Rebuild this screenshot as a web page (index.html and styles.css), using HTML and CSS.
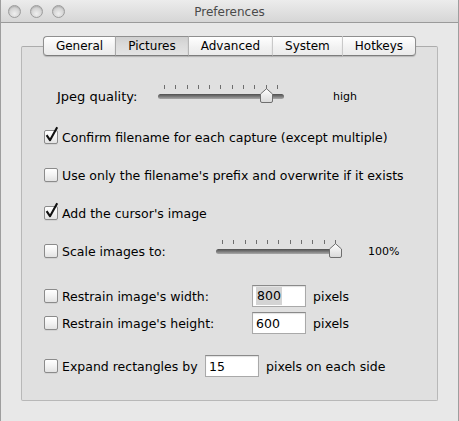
FILE: index.html
```html
<!DOCTYPE html>
<html>
<head>
<meta charset="utf-8">
<link rel="stylesheet" href="styles.css">
</head>
<body>
<div class="window">
  <header class="titlebar">
    <div class="lights"><span class="light"></span><span class="light"></span><span class="light"></span></div>
    <div class="title">Preferences</div>
    <div></div>
  </header>
  <main class="content">
    <div class="tabview">
      <nav class="tabs">
        <span class="tab">General</span>
        <span class="tab active">Pictures</span>
        <span class="tab">Advanced</span>
        <span class="tab">System</span>
        <span class="tab">Hotkeys</span>
      </nav>
      <section class="pane">
        <div class="row quality">
          <span class="quality-label">Jpeg quality:</span>
          <div class="slider" style="--v:0.9">
            <div class="ticks"><i></i><i></i><i></i><i></i><i></i><i></i><i></i><i></i><i></i><i></i><i></i></div>
            <div class="track"></div>
            <svg class="thumb" width="13" height="15" viewBox="0 0 13 15"><defs><linearGradient id="tg1" x1="0" y1="0" x2="0" y2="1"><stop offset="0" stop-color="#ffffff"/><stop offset="1" stop-color="#d9d9d9"/></linearGradient></defs><path d="M0.5 13 V6 L6.5 0.7 L12.5 6 V13 Q12.5 14.5 11 14.5 H2 Q0.5 14.5 0.5 13 Z" fill="url(#tg1)" stroke="#6e6e6e"/></svg>
          </div>
          <span class="value quality-value">high</span>
        </div>

        <div class="row">
          <span class="check on"><svg width="16" height="18" viewBox="0 0 16 18"><path d="M3.6 9.2 L7 14.2 L14.2 1.2" fill="none" stroke="#111" stroke-width="2.1" stroke-linejoin="round"/></svg></span>
          <span>Confirm filename for each capture (except multiple)</span>
        </div>

        <div class="row">
          <span class="check"></span>
          <span>Use only the filename's prefix and overwrite if it exists</span>
        </div>

        <div class="row">
          <span class="check on"><svg width="16" height="18" viewBox="0 0 16 18"><path d="M3.6 9.2 L7 14.2 L14.2 1.2" fill="none" stroke="#111" stroke-width="2.1" stroke-linejoin="round"/></svg></span>
          <span>Add the cursor's image</span>
        </div>

        <div class="row">
          <span class="check"></span>
          <span class="scale-label">Scale images to:</span>
          <div class="slider" style="--v:1">
            <div class="ticks"><i></i><i></i><i></i><i></i><i></i><i></i><i></i><i></i><i></i><i></i><i></i></div>
            <div class="track"></div>
            <svg class="thumb" width="13" height="15" viewBox="0 0 13 15"><defs><linearGradient id="tg2" x1="0" y1="0" x2="0" y2="1"><stop offset="0" stop-color="#ffffff"/><stop offset="1" stop-color="#d9d9d9"/></linearGradient></defs><path d="M0.5 13 V6 L6.5 0.7 L12.5 6 V13 Q12.5 14.5 11 14.5 H2 Q0.5 14.5 0.5 13 Z" fill="url(#tg2)" stroke="#6e6e6e"/></svg>
          </div>
          <span class="value scale-value">100%</span>
        </div>

        <div class="restrain">
          <div class="row">
            <span class="check"></span>
            <span class="restrain-label">Restrain image's width:</span>
            <span class="field"><span class="sel">800</span></span>
            <span class="unit">pixels</span>
          </div>
          <div class="row">
            <span class="check"></span>
            <span class="restrain-label">Restrain image's height:</span>
            <span class="field">600</span>
            <span class="unit">pixels</span>
          </div>
        </div>

        <div class="row expand">
          <span class="check"></span>
          <span class="expand-label">Expand rectangles by</span>
          <span class="field">15</span>
          <span class="unit">pixels on each side</span>
        </div>
      </section>
    </div>
  </main>
</div>
</body>
</html>
```

FILE: styles.css
```css
* { box-sizing: border-box; }

html, body {
  margin: 0;
  padding: 0;
}

body {
  width: 459px;
  height: 421px;
  overflow: hidden;
  font-family: "DejaVu Sans", "Liberation Sans", sans-serif;
  font-size: 12px;
  color: #000;
  background: #e8e8e8;
}

.window {
  width: 459px;
  height: 421px;
  border-left: 1px solid #9e9e9e;
  border-right: 1px solid #9e9e9e;
  background: #e8e8e8;
}

.titlebar {
  height: 23px;
  display: grid;
  grid-template-columns: 1fr auto 1fr;
  align-items: center;
  background: linear-gradient(#ececec, #d6d6d6);
  border-bottom: 1px solid #9a9a9a;
}

.lights {
  display: flex;
  gap: 9px;
  padding-left: 7px;
}

.light {
  width: 13px;
  height: 13px;
  border-radius: 50%;
  border: 1px solid #9c9c9c;
  background: radial-gradient(circle at 50% 70%, #efefef 0%, #d4d4d4 55%, #bdbdbd 100%);
  box-shadow: inset 0 1px 1px rgba(0,0,0,0.12);
}

.title {
  color: #4a4a4a;
  font-size: 12px;
  padding-top: 1px;
}

.content {
  padding: 13px 20px 0 20px;
}

.tabs {
  position: relative;
  z-index: 1;
  display: flex;
  justify-content: center;
  margin-bottom: -10px;
}

.tab {
  height: 20px;
  display: flex;
  align-items: center;
  padding: 0 12px 0 12px;
  background: linear-gradient(#ffffff, #f1f1f1 60%, #ebebeb);
  border-top: 1px solid #8f8f8f;
  border-bottom: 1px solid #7d7d7d;
  border-left: 1px solid #c9c9c9;
  box-shadow: 0 1px 1px rgba(0,0,0,0.18);
}

.tab:first-child {
  border-left: 1px solid #8f8f8f;
  border-radius: 4px 0 0 4px;
}

.tab:last-child {
  border-right: 1px solid #8f8f8f;
  border-radius: 0 4px 4px 0;
}

.tab.active {
  background: linear-gradient(#d0d0d0, #dcdcdc 50%, #e4e4e4);
  border-left-color: #a8a8a8;
}

.tab.active + .tab {
  border-left-color: #b5b5b5;
}

.pane {
  height: 355px;
  border: 1px solid #b8b8b8;
  border-top-color: #acacac;
  border-radius: 2px;
  background: #e0e0e0;
  padding: 38px 0 0 22px;
  display: flex;
  flex-direction: column;
  gap: 16px;
  font-size: 12.5px;
}

.row {
  height: 22px;
  display: flex;
  align-items: center;
}

.quality {
  padding-left: 13px;
  margin-bottom: 3px;
}

.quality-label {
  width: 101px;
  font-size: 13px;
}

.value {
  font-size: 11px;
}

.quality-value {
  margin-left: 49px;
}

.scale-value {
  margin-left: 26px;
}

.slider {
  position: relative;
  width: 126px;
  align-self: stretch;
  display: flex;
  flex-direction: column;
}

.ticks {
  height: 4px;
  display: flex;
  justify-content: space-between;
  padding: 0 6px;
}

.ticks i {
  width: 1px;
  height: 4px;
  background: #6e6e6e;
}

.track {
  margin-top: 5px;
  height: 5px;
  border-radius: 3px;
  background: linear-gradient(#4f4f4f, #7a7a7a 50%, #a9a9a9);
}

.thumb {
  position: absolute;
  top: 3px;
  left: calc(6px + var(--v) * 113px - 6px);
}

.check {
  position: relative;
  width: 14px;
  height: 14px;
  margin-right: 4px;
  flex: none;
  border: 1px solid #8b8b8b;
  border-radius: 2px;
  background: linear-gradient(#ffffff, #f3f3f3 50%, #e3e3e3);
  box-shadow: 0 1px 0 rgba(0,0,0,0.06);
}

.check svg {
  position: absolute;
  left: -2px;
  top: -5px;
}

.scale-label {
  width: 154px;
}

.restrain {
  display: flex;
  flex-direction: column;
  gap: 5px;
  margin-top: 7px;
}

.restrain-label {
  width: 190px;
}

.expand {
  margin-top: 5px;
}

.expand-label {
  width: 143px;
}

.field {
  width: 54px;
  height: 22px;
  display: flex;
  align-items: center;
  padding-left: 3px;
  background: #fff;
  border: 1px solid #a9a9a9;
  border-top-color: #8a8a8a;
  box-shadow: inset 0 1px 1px rgba(0,0,0,0.12);
}

.sel {
  background: #d4d4d4;
  padding: 1px 1px 2px 1px;
}

.unit {
  margin-left: 7px;
}
```
